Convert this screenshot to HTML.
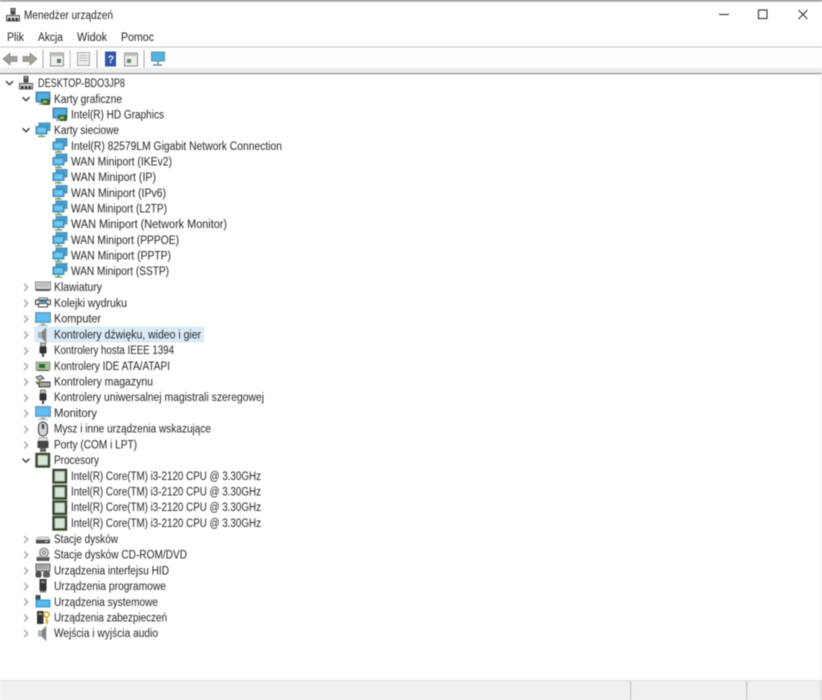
<!DOCTYPE html>
<html lang="pl">
<head>
<meta charset="utf-8">
<title>Menedżer urządzeń</title>
<style>
html,body{margin:0;padding:0;background:#fff;width:822px;height:700px;overflow:hidden}
svg{display:block}
text{font-family:"Liberation Sans",sans-serif;font-size:11.5px;fill:#262626}
.soft{filter:blur(.42px)}
.chev{fill:none;stroke:#4a4a4a;stroke-width:1.5}
.chevc{fill:none;stroke:#aaa;stroke-width:1.5}
</style>
</head>
<body>
<svg width="822" height="700" viewBox="0 0 822 700" xmlns="http://www.w3.org/2000/svg">
<defs>
<symbol id="gpu" viewBox="0 0 16 16" overflow="visible">
<rect x="1" y="1" width="14" height="10" fill="#3f97cf" stroke="#5f8398"/>
<rect x="2.5" y="2.5" width="11" height="7" fill="#4fb0e4"/>
<rect x="6" y="8" width="9" height="6" fill="#35602c"/>
<rect x="8" y="9.5" width="4" height="2.5" fill="#9dbb5e"/>
<rect x="4" y="12" width="4" height="2" fill="#9aa5ab"/>
</symbol>
<symbol id="net" viewBox="0 0 16 16" overflow="visible">
<rect x="4" y="0.5" width="11" height="7.5" fill="#3fa0d8" stroke="#5b8aa6"/>
<rect x="1" y="4" width="11" height="7.500" fill="#3fa9e2" stroke="#4e86a6"/>
<rect x="2.5" y="5.5" width="8" height="4.500" fill="#6fc7ee"/>
<path d="M6.500 11.500v2M3 14h7" stroke="#6ea06a" stroke-width="1.400" fill="none"/>
</symbol>
<symbol id="cpu" viewBox="0 0 16 16" overflow="visible">
<rect x="1.500" y="2" width="12.500" height="12.500" fill="#cfe0d0" stroke="#39472f" stroke-width="2.400"/>
<rect x="4" y="4.500" width="7.500" height="7.500" fill="#d7e4d6"/>
</symbol>
<symbol id="mon" viewBox="0 0 16 16" overflow="visible">
<rect x="0.500" y="1.500" width="15" height="10" fill="#4fb0ea" stroke="#7d97a8"/>
<rect x="2" y="3" width="12" height="7" fill="#62bdf0"/>
<path d="M6 12.500h4v1.500h-4z" fill="#9aa8b2"/>
<path d="M3 14.500h10" stroke="#a9b2b8"/>
</symbol>
<symbol id="kbd" viewBox="0 0 16 16" overflow="visible">
<rect x="0.500" y="3" width="15" height="8" fill="#d5d5d5" stroke="#8b8b8b"/>
<rect x="2" y="4.500" width="12" height="3.500" fill="#bdbdbd"/>
<rect x="1" y="10" width="14" height="2" fill="#555"/>
</symbol>
<symbol id="prn" viewBox="0 0 16 16" overflow="visible">
<rect x="3.500" y="3" width="9" height="3" fill="#fff" stroke="#666"/>
<rect x="0.500" y="5" width="15" height="4.500" fill="#e4e4e4" stroke="#444"/>
<rect x="3.500" y="8.500" width="9" height="3.500" fill="#fff" stroke="#444"/>
<path d="M4 6.500h8" stroke="#2f8aa8" stroke-width="2"/>
</symbol>
<symbol id="spk" viewBox="0 0 16 16" overflow="visible">
<path d="M3.500 5.500h3l4.500-4.500v14l-4.500-4.500h-3z" fill="#b3b8bb" stroke="#8c9195" stroke-width=".7"/>
<path d="M7 5.500l3.500-3.500v12l-3.500-3.500z" fill="#7b8185"/>
</symbol>
<symbol id="usb" viewBox="0 0 16 16" overflow="visible">
<rect x="5.500" y="1" width="5" height="3.500" fill="#bbb" stroke="#555" stroke-width=".7"/>
<rect x="4.500" y="4.500" width="7" height="7" rx="1" fill="#333"/>
<rect x="7" y="11" width="2" height="4" fill="#444"/>
</symbol>
<symbol id="ide" viewBox="0 0 16 16" overflow="visible">
<rect x="1" y="4" width="14" height="8" fill="#a9c09a" stroke="#7d8b72" stroke-width=".7"/>
<rect x="4" y="6" width="6" height="4" fill="#2c6e3a"/>
<path d="M2 12.500h12" stroke="#555"/>
</symbol>
<symbol id="stor" viewBox="0 0 16 16" overflow="visible">
<path d="M1 3l5-1.500 3 3-5 2z" fill="#bbb" stroke="#444" stroke-width=".9"/>
<rect x="4" y="8" width="11" height="5" fill="#a6a696" stroke="#333" stroke-width=".9"/>
<path d="M1 8l3 2" stroke="#4f7532" stroke-width="2"/>
</symbol>
<symbol id="mouse" viewBox="0 0 16 16" overflow="visible">
<rect x="3.500" y="1" width="9" height="14" rx="4.500" fill="#cfd3d6" stroke="#333"/>
<rect x="6.800" y="3" width="2.400" height="5" rx="1" fill="#444"/>
</symbol>
<symbol id="port" viewBox="0 0 16 16" overflow="visible">
<rect x="4" y="0.500" width="8" height="3.500" fill="#e2e2e2" stroke="#888" stroke-width=".7"/>
<rect x="2.500" y="4" width="11" height="7" fill="#454545"/>
<path d="M5 11h6v4H5z" fill="#666"/>
</symbol>
<symbol id="disk" viewBox="0 0 16 16" overflow="visible">
<path d="M3 6h10l2 3H1z" fill="#ddd" stroke="#888" stroke-width=".6"/>
<rect x="1" y="9" width="14" height="3.500" fill="#4d4d4d"/>
<rect x="10" y="10" width="3" height="1" fill="#ddd"/>
</symbol>
<symbol id="cd" viewBox="0 0 16 16" overflow="visible">
<circle cx="9" cy="5.500" r="4.500" fill="#d0d0d0" stroke="#666" stroke-width=".8"/>
<circle cx="9" cy="5.500" r="1.300" fill="#fff" stroke="#444" stroke-width=".6"/>
<rect x="1.500" y="10" width="13" height="4" fill="#5c5c5c"/>
<rect x="3" y="9" width="10" height="1.500" fill="#aaa"/>
</symbol>
<symbol id="hid" viewBox="0 0 16 16" overflow="visible">
<rect x="1" y="1.500" width="14" height="7" fill="#c0c0c0" stroke="#555" stroke-width=".9"/>
<path d="M2.500 3.500h11M2.500 5.500h11" stroke="#666" stroke-dasharray="1.300 .8"/>
<rect x="0.500" y="9" width="6" height="6" rx="2" fill="#4d4d4d"/>
<rect x="8" y="9" width="7" height="6" rx="2" fill="#5f5f5f"/>
</symbol>
<symbol id="prog" viewBox="0 0 16 16" overflow="visible">
<rect x="4.500" y="1" width="7" height="11.500" fill="#333"/>
<rect x="6" y="3" width="4" height="2" fill="#8d8d8d"/>
<rect x="5" y="12.500" width="6" height="2" fill="#777"/>
</symbol>
<symbol id="sys" viewBox="0 0 16 16" overflow="visible">
<rect x="0.500" y="1" width="5" height="6" fill="#3d4c56"/>
<rect x="0.500" y="5.500" width="15" height="8" fill="#3aa2da"/>
<rect x="2" y="7" width="12" height="5" fill="#5dbae9"/>
</symbol>
<symbol id="sec" viewBox="0 0 16 16" overflow="visible">
<rect x="2" y="1" width="6.500" height="13" fill="#333"/>
<rect x="3.500" y="3" width="3.500" height="2" fill="#9a9a9a"/>
<circle cx="11.500" cy="4.500" r="2.600" fill="none" stroke="#d8a92c" stroke-width="1.600"/>
<path d="M11.500 7v7M11.500 11h2M11.500 13.500h1.500" stroke="#d8a92c" stroke-width="1.500" fill="none"/>
</symbol>
<symbol id="pc" viewBox="0 0 16 16" overflow="visible">
<rect x="5.500" y="1" width="5" height="6.500" fill="#4a4a4a"/>
<rect x="6.500" y="2.200" width="3" height="1.400" fill="#aaa"/>
<path d="M8 7v2" stroke="#444"/>
<rect x="1.500" y="8.500" width="13" height="5.500" fill="#d4d4d4" stroke="#555"/>
<rect x="3" y="11" width="2.500" height="2.500" fill="#2b2b2b"/><rect x="6.800" y="11" width="2.500" height="2.500" fill="#2b2b2b"/><rect x="10.500" y="11" width="2.500" height="2.500" fill="#2b2b2b"/>
</symbol>
<symbol id="o" viewBox="0 0 10 10"><path class="chev" d="M1.500 3.200l3.500 3.500 3.500-3.500"/></symbol>
<symbol id="c" viewBox="0 0 10 10"><path class="chevc" d="M3.200 1.500l3.500 3.500-3.500 3.500"/></symbol>
</defs>

<rect width="822" height="700" fill="#fff"/>
<g class="soft">
<!-- window chrome -->
<rect width="822" height="1.500" fill="#8a8a8a"/>
<rect x="0" y="46.500" width="822" height="1" fill="#c8c8c8"/>
<rect x="0" y="47.500" width="822" height="20" fill="#fdfdfd"/>
<rect x="0" y="68" width="822" height="5" fill="#ececec"/>
<rect x="0" y="73" width="822" height="1.200" fill="#8f8f8f"/>
<rect x="820.500" y="74" width="1.500" height="607" fill="#f4f4f4"/>
<!-- status bar -->
<rect x="0" y="681" width="822" height="19" fill="#f0f0f0"/>
<rect x="0" y="680" width="822" height="1.500" fill="#e4e4e4"/>
<rect x="630" y="681" width="1.300" height="19" fill="#c9c9c9"/>
<rect x="746" y="681" width="1.300" height="19" fill="#c9c9c9"/>
<rect x="820" y="681" width="1.300" height="19" fill="#d4d4d4"/>

<!-- title -->
<use href="#pc" x="5" y="7" width="16" height="16"/>
<text x="24" y="19" textLength="89" lengthAdjust="spacingAndGlyphs">Menedżer urządzeń</text>
<path d="M719 14.500h10" stroke="#333" stroke-width="1.100"/>
<rect x="758.500" y="10" width="8.500" height="8.500" fill="none" stroke="#333" stroke-width="1.100"/>
<path d="M798.500 10l9 9M807.500 10l-9 9" stroke="#333" stroke-width="1.100"/>
<!-- menu -->
<text x="7" y="41" textLength="17" lengthAdjust="spacingAndGlyphs">Plik</text>
<text x="38" y="41" textLength="25" lengthAdjust="spacingAndGlyphs">Akcja</text>
<text x="77" y="41" textLength="30" lengthAdjust="spacingAndGlyphs">Widok</text>
<text x="121" y="41" textLength="33" lengthAdjust="spacingAndGlyphs">Pomoc</text>
<!-- toolbar -->
<path d="M3 59l7-6v3.500h7v5h-7v3.500z" fill="#9a9f9a" stroke="#84897f" stroke-width=".7"/>
<path d="M37 59l-7-6v3.500h-7v5h7v3.500z" fill="#a39f93" stroke="#8b877b" stroke-width=".7"/>
<rect x="42.500" y="50" width="1" height="18" fill="#a8a8a8"/>
<rect x="50.500" y="53" width="13" height="13" fill="#eeeeee" stroke="#8c8c8c"/>
<rect x="50.500" y="53" width="13" height="3" fill="#bdbdbd"/>
<rect x="57" y="59" width="4" height="4" fill="#5d7f5d"/>
<rect x="69.500" y="50" width="1" height="18" fill="#c0c0c0"/>
<rect x="77.500" y="52.500" width="12" height="13" fill="#ececec" stroke="#a8a8a8"/>
<path d="M79.500 55.500h8M79.500 58h8M79.500 60.500h8" stroke="#bbb"/>
<rect x="96.500" y="50" width="1" height="18" fill="#999"/>
<rect x="105" y="51.500" width="11" height="15" fill="#2f55a8"/>
<text x="107.500" y="63" style="font-size:11px;font-weight:bold;fill:#e8ecf8">?</text>
<rect x="124.500" y="53" width="13" height="13" fill="#eeeeee" stroke="#8c8c8c"/>
<rect x="124.500" y="53" width="13" height="3" fill="#bdbdbd"/>
<rect x="127" y="59" width="4" height="4" fill="#5d8f5d"/>
<rect x="143.500" y="50" width="1" height="18" fill="#a8a8a8"/>
<rect x="151.500" y="52" width="13" height="9" fill="#54b3dd" stroke="#5d93ad"/>
<path d="M158 61v3M153 65h9" stroke="#6c8e9c" stroke-width="1.500"/>

<!-- selection -->
<rect x="34" y="326.500" width="170" height="16" fill="#d9ebf8"/>

<!-- tree chevrons -->
<use href="#o" x="4.500" y="78" width="10" height="10"/>
<use href="#o" x="21" y="94" width="10" height="10"/>
<use href="#o" x="21" y="125" width="10" height="10"/>
<use href="#c" x="21" y="282.500" width="10" height="10"/>
<use href="#c" x="21" y="298.500" width="10" height="10"/>
<use href="#c" x="21" y="314" width="10" height="10"/>
<use href="#c" x="21" y="330" width="10" height="10"/>
<use href="#c" x="21" y="346" width="10" height="10"/>
<use href="#c" x="21" y="361.500" width="10" height="10"/>
<use href="#c" x="21" y="377" width="10" height="10"/>
<use href="#c" x="21" y="393" width="10" height="10"/>
<use href="#c" x="21" y="408.500" width="10" height="10"/>
<use href="#c" x="21" y="424.500" width="10" height="10"/>
<use href="#c" x="21" y="440" width="10" height="10"/>
<use href="#o" x="21" y="455.500" width="10" height="10"/>
<use href="#c" x="21" y="534.500" width="10" height="10"/>
<use href="#c" x="21" y="550" width="10" height="10"/>
<use href="#c" x="21" y="566" width="10" height="10"/>
<use href="#c" x="21" y="581.500" width="10" height="10"/>
<use href="#c" x="21" y="597" width="10" height="10"/>
<use href="#c" x="21" y="613" width="10" height="10"/>
<use href="#c" x="21" y="628.500" width="10" height="10"/>

<!-- tree icons -->
<use href="#pc" x="18" y="75" width="16" height="16"/>
<use href="#gpu" x="35" y="91" width="16" height="16"/>
<use href="#gpu" x="52" y="107" width="16" height="16"/>
<use href="#net" x="35" y="122.500" width="16" height="16"/>
<use href="#net" x="52" y="138" width="16" height="16"/>
<use href="#net" x="52" y="153.500" width="16" height="16"/>
<use href="#net" x="52" y="169" width="16" height="16"/>
<use href="#net" x="52" y="185" width="16" height="16"/>
<use href="#net" x="52" y="200.500" width="16" height="16"/>
<use href="#net" x="52" y="216" width="16" height="16"/>
<use href="#net" x="52" y="232" width="16" height="16"/>
<use href="#net" x="52" y="247.500" width="16" height="16"/>
<use href="#net" x="52" y="263" width="16" height="16"/>
<use href="#kbd" x="35" y="279" width="16" height="16"/>
<use href="#prn" x="35" y="295" width="16" height="16"/>
<use href="#mon" x="35" y="311" width="16" height="16"/>
<use href="#spk" x="35" y="327" width="16" height="16"/>
<use href="#usb" x="35" y="342" width="16" height="16"/>
<use href="#ide" x="35" y="358" width="16" height="16"/>
<use href="#stor" x="35" y="374" width="16" height="16"/>
<use href="#usb" x="35" y="389" width="16" height="16"/>
<use href="#mon" x="35" y="405" width="16" height="16"/>
<use href="#mouse" x="35" y="421" width="16" height="16"/>
<use href="#port" x="35" y="437" width="16" height="16"/>
<use href="#cpu" x="35" y="452" width="16" height="16"/>
<use href="#cpu" x="52" y="468" width="16" height="16"/>
<use href="#cpu" x="52" y="484" width="16" height="16"/>
<use href="#cpu" x="52" y="499.500" width="16" height="16"/>
<use href="#cpu" x="52" y="515" width="16" height="16"/>
<use href="#disk" x="35" y="531" width="16" height="16"/>
<use href="#cd" x="35" y="547" width="16" height="16"/>
<use href="#hid" x="35" y="562.500" width="16" height="16"/>
<use href="#prog" x="35" y="578" width="16" height="16"/>
<use href="#sys" x="35" y="594" width="16" height="16"/>
<use href="#sec" x="35" y="610" width="16" height="16"/>
<use href="#spk" x="35" y="625.500" width="16" height="16"/>

<!-- tree text -->
<text x="38" y="87" textLength="87" lengthAdjust="spacingAndGlyphs">DESKTOP-BDO3JP8</text>
<text x="54" y="103" textLength="68" lengthAdjust="spacingAndGlyphs">Karty graficzne</text>
<text x="71" y="118.500" textLength="93" lengthAdjust="spacingAndGlyphs">Intel(R) HD Graphics</text>
<text x="54" y="134" textLength="65" lengthAdjust="spacingAndGlyphs">Karty sieciowe</text>
<text x="71" y="150" textLength="211" lengthAdjust="spacingAndGlyphs">Intel(R) 82579LM Gigabit Network Connection</text>
<text x="71" y="165.500" textLength="101" lengthAdjust="spacingAndGlyphs">WAN Miniport (IKEv2)</text>
<text x="71" y="181" textLength="85" lengthAdjust="spacingAndGlyphs">WAN Miniport (IP)</text>
<text x="71" y="197" textLength="95" lengthAdjust="spacingAndGlyphs">WAN Miniport (IPv6)</text>
<text x="71" y="212.500" textLength="96" lengthAdjust="spacingAndGlyphs">WAN Miniport (L2TP)</text>
<text x="71" y="228" textLength="156" lengthAdjust="spacingAndGlyphs">WAN Miniport (Network Monitor)</text>
<text x="71" y="244" textLength="108" lengthAdjust="spacingAndGlyphs">WAN Miniport (PPPOE)</text>
<text x="71" y="259.500" textLength="100" lengthAdjust="spacingAndGlyphs">WAN Miniport (PPTP)</text>
<text x="71" y="275" textLength="98" lengthAdjust="spacingAndGlyphs">WAN Miniport (SSTP)</text>
<text x="54" y="291" textLength="48" lengthAdjust="spacingAndGlyphs">Klawiatury</text>
<text x="54" y="307" textLength="73" lengthAdjust="spacingAndGlyphs">Kolejki wydruku</text>
<text x="54" y="322.500" textLength="47" lengthAdjust="spacingAndGlyphs">Komputer</text>
<text x="54" y="338.500" textLength="147" lengthAdjust="spacingAndGlyphs">Kontrolery dźwięku, wideo i gier</text>
<text x="54" y="354" textLength="120" lengthAdjust="spacingAndGlyphs">Kontrolery hosta IEEE 1394</text>
<text x="54" y="370" textLength="116" lengthAdjust="spacingAndGlyphs">Kontrolery IDE ATA/ATAPI</text>
<text x="54" y="385.500" textLength="99" lengthAdjust="spacingAndGlyphs">Kontrolery magazynu</text>
<text x="54" y="401" textLength="210" lengthAdjust="spacingAndGlyphs">Kontrolery uniwersalnej magistrali szeregowej</text>
<text x="54" y="417" textLength="43" lengthAdjust="spacingAndGlyphs">Monitory</text>
<text x="54" y="432.500" textLength="157" lengthAdjust="spacingAndGlyphs">Mysz i inne urządzenia wskazujące</text>
<text x="54" y="448.500" textLength="83" lengthAdjust="spacingAndGlyphs">Porty (COM i LPT)</text>
<text x="54" y="464" textLength="45" lengthAdjust="spacingAndGlyphs">Procesory</text>
<text x="71" y="480" textLength="190" lengthAdjust="spacingAndGlyphs">Intel(R) Core(TM) i3-2120 CPU @ 3.30GHz</text>
<text x="71" y="495.500" textLength="190" lengthAdjust="spacingAndGlyphs">Intel(R) Core(TM) i3-2120 CPU @ 3.30GHz</text>
<text x="71" y="511" textLength="190" lengthAdjust="spacingAndGlyphs">Intel(R) Core(TM) i3-2120 CPU @ 3.30GHz</text>
<text x="71" y="527" textLength="190" lengthAdjust="spacingAndGlyphs">Intel(R) Core(TM) i3-2120 CPU @ 3.30GHz</text>
<text x="54" y="543" textLength="64" lengthAdjust="spacingAndGlyphs">Stacje dysków</text>
<text x="54" y="558.500" textLength="133" lengthAdjust="spacingAndGlyphs">Stacje dysków CD-ROM/DVD</text>
<text x="54" y="574.500" textLength="115" lengthAdjust="spacingAndGlyphs">Urządzenia interfejsu HID</text>
<text x="54" y="590" textLength="112" lengthAdjust="spacingAndGlyphs">Urządzenia programowe</text>
<text x="54" y="606" textLength="104" lengthAdjust="spacingAndGlyphs">Urządzenia systemowe</text>
<text x="54" y="621.500" textLength="113" lengthAdjust="spacingAndGlyphs">Urządzenia zabezpieczeń</text>
<text x="54" y="637" textLength="104" lengthAdjust="spacingAndGlyphs">Wejścia i wyjścia audio</text>
</g>
</svg>
</body>
</html>
